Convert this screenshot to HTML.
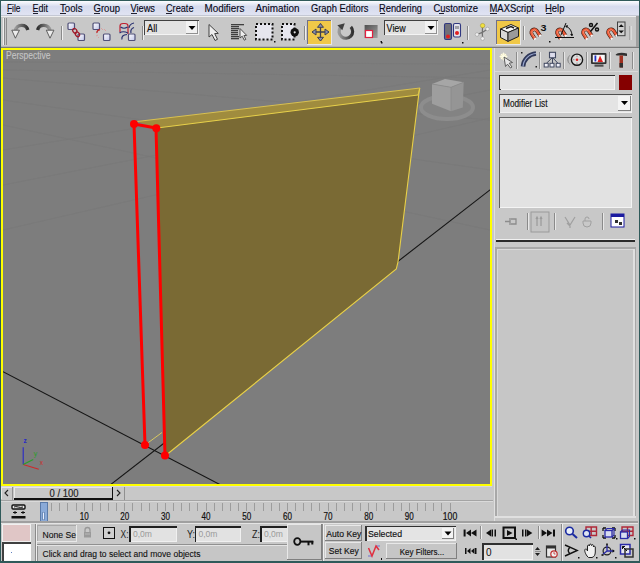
<!DOCTYPE html>
<html><head><meta charset="utf-8">
<style>
html,body{margin:0;padding:0;width:640px;height:563px;overflow:hidden;background:#c8c8c8;}
svg{display:block;font-family:"Liberation Sans",sans-serif;}
</style></head>
<body>
<svg width="640" height="563" viewBox="0 0 640 563" shape-rendering="crispEdges">
<defs>
<linearGradient id="mb" x1="0" y1="0" x2="0" y2="1">
<stop offset="0" stop-color="#fdfdff"/><stop offset="0.1" stop-color="#f2f4fb"/><stop offset="0.4" stop-color="#d6dbee"/><stop offset="1" stop-color="#e0e3f2"/>
</linearGradient>

</defs>
<!-- base -->
<rect x="0" y="0" width="640" height="563" fill="#c8c8c8"/>
<!-- menubar -->
<rect x="1" y="1" width="638" height="14" fill="url(#mb)"/><rect x="1" y="15" width="638" height="1" fill="#c4c8d4"/><rect x="1" y="16" width="638" height="1" fill="#eeeeee"/>
<g id="menu" font-size="10.9" fill="#0a0a1a" stroke="#0a0a1a" stroke-width="0.15">
<text x="7" y="12.3" textLength="13.5" lengthAdjust="spacingAndGlyphs">File</text>
<text x="32.5" y="12.3" textLength="15.5" lengthAdjust="spacingAndGlyphs">Edit</text>
<text x="60" y="12.3" textLength="22.5" lengthAdjust="spacingAndGlyphs">Tools</text>
<text x="93.5" y="12.3" textLength="26.5" lengthAdjust="spacingAndGlyphs">Group</text>
<text x="130.5" y="12.3" textLength="24.5" lengthAdjust="spacingAndGlyphs">Views</text>
<text x="166" y="12.3" textLength="27.5" lengthAdjust="spacingAndGlyphs">Create</text>
<text x="204.5" y="12.3" textLength="40" lengthAdjust="spacingAndGlyphs">Modifiers</text>
<text x="255.5" y="12.3" textLength="44" lengthAdjust="spacingAndGlyphs">Animation</text>
<text x="311" y="12.3" textLength="57.5" lengthAdjust="spacingAndGlyphs">Graph Editors</text>
<text x="379" y="12.3" textLength="43" lengthAdjust="spacingAndGlyphs">Rendering</text>
<text x="433.5" y="12.3" textLength="44.5" lengthAdjust="spacingAndGlyphs">Customize</text>
<text x="489.5" y="12.3" textLength="44.5" lengthAdjust="spacingAndGlyphs">MAXScript</text>
<text x="545" y="12.3" textLength="19.5" lengthAdjust="spacingAndGlyphs">Help</text>
</g>
<g fill="#202030">
<rect x="7" y="13.2" width="5" height="1"/><rect x="32.5" y="13.2" width="5" height="1"/><rect x="60" y="13.2" width="5.5" height="1"/>
<rect x="93.5" y="13.2" width="6.5" height="1"/><rect x="130.5" y="13.2" width="6" height="1"/><rect x="166" y="13.2" width="6" height="1"/>
<rect x="379.5" y="13.2" width="5.5" height="1"/><rect x="438.8" y="13.2" width="5" height="1"/><rect x="489.5" y="13.2" width="7" height="1"/>
<rect x="545.5" y="13.2" width="6" height="1"/>
</g>
<!-- toolbar base -->
<rect x="1" y="17" width="638" height="29" fill="#c8c8c8"/>
<rect x="1" y="46" width="638" height="1" fill="#b4b4b4"/><rect x="1" y="47" width="638" height="1" fill="#7a7a7a"/>
<g id="toolbar" shape-rendering="geometricPrecision">
<linearGradient id="arcg" x1="0" y1="0" x2="1" y2="0"><stop offset="0" stop-color="#9a9a9a"/><stop offset="1" stop-color="#303030"/></linearGradient>
<linearGradient id="arcg2" x1="0" y1="0" x2="1" y2="0"><stop offset="0" stop-color="#303030"/><stop offset="1" stop-color="#9a9a9a"/></linearGradient>
<linearGradient id="sqg" x1="0" y1="0" x2="1" y2="1"><stop offset="0" stop-color="#ffffff"/><stop offset="1" stop-color="#c0c4e8"/></linearGradient>
<!-- grip -->
<rect x="3" y="18" width="1" height="27" fill="#f0f0f0"/><rect x="4" y="18" width="1" height="27" fill="#8a8a8a"/>
<rect x="6" y="18" width="1" height="27" fill="#8a8a8a"/>
<!-- undo -->
<path d="M27.8,30 A6.3,6.2 0 0 0 15.5,30.5" fill="none" stroke="url(#arcg)" stroke-width="3.4"/>
<path d="M11.8,30.2 L19.4,30.2 L15.4,38.2 Z" fill="#ececec" stroke="#505050" stroke-width="0.9"/>
<!-- redo -->
<path d="M37.6,30 A6.3,6.2 0 0 1 49.9,30.5" fill="none" stroke="url(#arcg2)" stroke-width="3.4"/>
<path d="M46.3,30.2 L53.9,30.2 L50,38.2 Z" fill="#ececec" stroke="#505050" stroke-width="0.9"/>
<rect x="61" y="26" width="1" height="14" fill="#8a8a8a"/><rect x="62" y="26" width="1" height="14" fill="#f0f0f0"/>
<!-- link -->
<rect x="68" y="23" width="6.5" height="6.5" rx="1" fill="url(#sqg)" stroke="#505078" stroke-width="1.2"/>
<rect x="78" y="34" width="6.5" height="6.5" rx="1" fill="url(#sqg)" stroke="#505078" stroke-width="1.2"/>
<ellipse cx="74.8" cy="30.8" rx="2.5" ry="1.9" transform="rotate(55 74.8 30.8)" fill="none" stroke="#a01a2a" stroke-width="1.3"/>
<ellipse cx="77.4" cy="34.3" rx="2.5" ry="1.9" transform="rotate(55 77.4 34.3)" fill="none" stroke="#a01a2a" stroke-width="1.3"/>
<!-- unlink -->
<rect x="93" y="23" width="6.5" height="6.5" rx="1" fill="url(#sqg)" stroke="#505078" stroke-width="1.2"/>
<rect x="103.5" y="34" width="6.5" height="6.5" rx="1" fill="url(#sqg)" stroke="#505078" stroke-width="1.2"/>
<path d="M97,33 a2.5,2.5 0 0 1 3,-3" fill="none" stroke="#c02020" stroke-width="1.3"/>
<path d="M96,36 l2,-1 M101,28 l2,2 M104,29 l2,2 M98,38 l1,-1" stroke="#d8a0a0" stroke-width="1"/>
<!-- bind -->
<path d="M120,32 L120,26 Q120,23.5 123,23.5 L125,23.5 Q128,23.5 128,26 L128,34" fill="none" stroke="#c02030" stroke-width="1.2"/>
<path d="M120.5,27 Q124,29.5 127.5,27 M119.5,33 Q123,30.5 128,33 M122,39.5 Q121,35 127,34.5 M129,28 Q129.5,24 134,23 M131,33 Q130,29 134,27.5" fill="none" stroke="#283070" stroke-width="1.2"/>
<rect x="128.5" y="34" width="6.5" height="6.5" rx="1" fill="url(#sqg)" stroke="#505078" stroke-width="1.2"/>
<rect x="142" y="26" width="1" height="14" fill="#8a8a8a"/><rect x="143" y="26" width="1" height="14" fill="#f0f0f0"/>
<!-- All dropdown -->
<rect x="144" y="20" width="55" height="15" fill="#f4f4f4"/>
<rect x="144" y="20" width="55" height="1" fill="#404040"/><rect x="144" y="20" width="1" height="15" fill="#404040"/>
<rect x="145" y="21" width="53" height="13" fill="#e2e2e2"/>
<rect x="186" y="21" width="12" height="13" fill="#f2f2f2"/>
<rect x="186" y="33" width="12" height="1" fill="#909090"/><rect x="197" y="21" width="1" height="13" fill="#909090"/>
<polygon points="188.5,26 195.5,26 192,30" fill="#000"/>
<text x="147" y="32" font-size="10.2" fill="#101010" stroke="#101010" stroke-width="0.15" textLength="10.3" lengthAdjust="spacingAndGlyphs">All</text>
<!-- select cursor -->
<path d="M209,24.5 L209,37 L212,34.5 L215,40.5 L217.5,39.3 L214.7,33.6 L218.3,33.4 Z" fill="#eeeeee" stroke="#404040" stroke-width="1"/>
<!-- select by name -->
<g fill="#404040">
<rect x="231" y="24" width="13" height="1.3"/><rect x="231" y="26" width="8" height="1.3"/><rect x="231" y="28" width="8" height="1.3"/>
<rect x="231" y="30" width="7" height="1.3"/><rect x="231" y="32" width="7" height="1.3"/><rect x="231" y="34" width="7" height="1.3"/>
<rect x="231" y="36" width="8" height="1.3"/><rect x="231" y="38" width="8" height="1.3"/>
</g>
<path d="M240,28.5 L240,38 L242.2,36.2 L244.3,40.2 L245.8,39.4 L243.9,35.6 L246.7,35.4 Z" fill="#eeeeee" stroke="#404040" stroke-width="0.9"/>
<!-- rect select -->
<rect x="256" y="24" width="16.5" height="15.5" fill="#e6e6ee"/>
<rect x="256" y="24" width="16.5" height="15.5" fill="none" stroke="#101010" stroke-width="2" stroke-dasharray="2,2"/>
<rect x="274" y="41" width="1.5" height="1.5" fill="#101010"/>
<!-- window crossing -->
<rect x="282" y="24" width="12.5" height="15.5" fill="#e6e6ee"/>
<rect x="282" y="24" width="12.5" height="15.5" fill="none" stroke="#101010" stroke-width="2" stroke-dasharray="2,2"/>
<circle cx="294.7" cy="32.3" r="4.2" fill="#101010"/><circle cx="294.7" cy="32.3" r="1.1" fill="#e0e0e0"/>
<rect x="304" y="26" width="1" height="14" fill="#8a8a8a"/><rect x="305" y="26" width="1" height="14" fill="#f0f0f0"/>
<!-- move button -->
<rect x="307" y="20" width="25" height="25" fill="#f0c848"/>
<rect x="307" y="20" width="25" height="1" fill="#707088"/><rect x="307" y="20" width="1" height="25" fill="#707088"/>
<rect x="307" y="44" width="25" height="1" fill="#e8e8e8"/><rect x="331" y="20" width="1" height="25" fill="#e8e8e8"/>
<path d="M312,32 H329 M320.5,23.6 V41" stroke="#404050" stroke-width="1.3"/>
<path d="M312,32 L316,29 L316,35 Z M329,32 L325,29 L325,35 Z M320.5,23.6 L317.5,27.3 L323.5,27.3 Z M320.5,41 L317.5,37.3 L323.5,37.3 Z" fill="#8890b0" stroke="#404050" stroke-width="1"/>
<!-- rotate -->
<path d="M340.3,27.5 A6.8,6.8 0 1 0 350.8,26.8" fill="none" stroke="url(#arcg)" stroke-width="3.2"/>
<path d="M344.8,23.3 L337.3,25.3 L342.3,30.2 Z" fill="#404040"/>
<!-- scale -->
<linearGradient id="scg" x1="0" y1="0" x2="1" y2="1"><stop offset="0" stop-color="#505050"/><stop offset="1" stop-color="#a0a0a0"/></linearGradient>
<rect x="364.6" y="25" width="13" height="13" fill="url(#scg)"/>
<rect x="365.5" y="30.5" width="7" height="7" fill="#ffffff" stroke="#e02040" stroke-width="1.2"/>
<rect x="380.5" y="41" width="1.5" height="1.5" fill="#101010"/>
<!-- View dropdown -->
<rect x="384" y="20" width="54" height="15" fill="#f4f4f4"/>
<rect x="384" y="20" width="54" height="1" fill="#404040"/><rect x="384" y="20" width="1" height="15" fill="#404040"/>
<rect x="385" y="21" width="52" height="13" fill="#e2e2e2"/>
<rect x="425" y="21" width="12" height="13" fill="#f2f2f2"/>
<rect x="425" y="33" width="12" height="1" fill="#909090"/><rect x="436" y="21" width="1" height="13" fill="#909090"/>
<polygon points="427.5,26 434.5,26 431,30" fill="#000"/>
<text x="386.6" y="32" font-size="10.2" fill="#101010" stroke="#101010" stroke-width="0.15" textLength="19.2" lengthAdjust="spacingAndGlyphs">View</text>
<rect x="381" y="42" width="1.5" height="1.5" fill="#101010"/>
<!-- pivot -->
<rect x="444.5" y="23.5" width="7" height="16" rx="1.5" fill="#707078" stroke="#303880" stroke-width="1.1"/>
<circle cx="448" cy="36.5" r="2" fill="#e02020"/>
<rect x="453.5" y="23.5" width="7" height="13.5" rx="1.5" fill="#e4e4ec" stroke="#303880" stroke-width="1.1"/>
<rect x="455" y="26" width="4" height="3" fill="#a0a0a8"/>
<circle cx="457" cy="33" r="2" fill="#e02020"/>
<rect x="462" y="42" width="1.5" height="1.5" fill="#101010"/>
<rect x="467" y="26" width="1" height="14" fill="#8a8a8a"/><rect x="468" y="26" width="1" height="14" fill="#f0f0f0"/>
<!-- manipulate -->
<path d="M482.3,32.4 L482.6,25.6 M482.3,32.4 L487.5,29 M482.3,32.4 L477,34.5 M482.3,32.4 L482.6,38.6" stroke="#707070" stroke-width="1.2"/>
<circle cx="482.6" cy="25.6" r="2.2" fill="#f0e040" stroke="#a09020" stroke-width="0.5"/>
<circle cx="487.5" cy="29" r="1.8" fill="#f0f0f0" stroke="#909090" stroke-width="0.5"/>
<circle cx="477" cy="34.5" r="1.8" fill="#f0f0f0" stroke="#909090" stroke-width="0.5"/>
<circle cx="482.6" cy="38.6" r="1.8" fill="#f0f0f0" stroke="#909090" stroke-width="0.5"/>
<!-- yellow button -->
<rect x="496" y="20" width="25" height="25" fill="#f0c848"/>
<rect x="496" y="20" width="25" height="1" fill="#707088"/><rect x="496" y="20" width="1" height="25" fill="#707088"/>
<rect x="496" y="44" width="25" height="1" fill="#e8e8e8"/><rect x="520" y="20" width="1" height="25" fill="#e8e8e8"/>
<path d="M500.5,29 L511,24.5 L518.5,28 L508,32.5 Z" fill="#f8f8f8" stroke="#202020" stroke-width="1"/>
<path d="M500.5,29 L508,32.5 L508,41.4 L500.5,37.5 Z" fill="#d8d8d8" stroke="#202020" stroke-width="1"/>
<path d="M508,32.5 L518.5,28 L518.5,36.5 L508,41.4 Z" fill="#9a9a9a" stroke="#202020" stroke-width="1"/>
<path d="M506,28.5 L511,26.5 L514,28" stroke="#202020" stroke-width="1.5" fill="none"/>
<rect x="523" y="26" width="1" height="14" fill="#8a8a8a"/><rect x="524" y="26" width="1" height="14" fill="#f0f0f0"/>
<!-- snaps -->

<g transform="translate(534.3,32.4) rotate(-33)">
<path d="M-3,6 L-3,0 A3,3 0 0 1 3,0 L3,6" fill="none" stroke="#4a2418" stroke-width="3.6"/>
<path d="M-3,6 L-3,0 A3,3 0 0 1 3,0 L3,6" fill="none" stroke="#ee5a38" stroke-width="2.3"/>
<path d="M-2.3,5 L-2.3,0 A2.3,2.3 0 0 1 2.3,0" fill="none" stroke="#ffa080" stroke-width="0.7"/>
<rect x="-4.2" y="5" width="2.4" height="1.6" fill="#f8f8f8"/><rect x="1.8" y="5" width="2.4" height="1.6" fill="#f8f8f8"/>
</g>
<g transform="translate(560,32.4) rotate(-33)">
<path d="M-3,6 L-3,0 A3,3 0 0 1 3,0 L3,6" fill="none" stroke="#4a2418" stroke-width="3.6"/>
<path d="M-3,6 L-3,0 A3,3 0 0 1 3,0 L3,6" fill="none" stroke="#ee5a38" stroke-width="2.3"/>
<path d="M-2.3,5 L-2.3,0 A2.3,2.3 0 0 1 2.3,0" fill="none" stroke="#ffa080" stroke-width="0.7"/>
<rect x="-4.2" y="5" width="2.4" height="1.6" fill="#f8f8f8"/><rect x="1.8" y="5" width="2.4" height="1.6" fill="#f8f8f8"/>
</g>
<g transform="translate(586,32.4) rotate(-33)">
<path d="M-3,6 L-3,0 A3,3 0 0 1 3,0 L3,6" fill="none" stroke="#4a2418" stroke-width="3.6"/>
<path d="M-3,6 L-3,0 A3,3 0 0 1 3,0 L3,6" fill="none" stroke="#ee5a38" stroke-width="2.3"/>
<path d="M-2.3,5 L-2.3,0 A2.3,2.3 0 0 1 2.3,0" fill="none" stroke="#ffa080" stroke-width="0.7"/>
<rect x="-4.2" y="5" width="2.4" height="1.6" fill="#f8f8f8"/><rect x="1.8" y="5" width="2.4" height="1.6" fill="#f8f8f8"/>
</g>
<g transform="translate(611,32.2) rotate(-33)">
<path d="M-3,6 L-3,0 A3,3 0 0 1 3,0 L3,6" fill="none" stroke="#4a2418" stroke-width="3.6"/>
<path d="M-3,6 L-3,0 A3,3 0 0 1 3,0 L3,6" fill="none" stroke="#ee5a38" stroke-width="2.3"/>
<path d="M-2.3,5 L-2.3,0 A2.3,2.3 0 0 1 2.3,0" fill="none" stroke="#ffa080" stroke-width="0.7"/>
<rect x="-4.2" y="5" width="2.4" height="1.6" fill="#f8f8f8"/><rect x="1.8" y="5" width="2.4" height="1.6" fill="#f8f8f8"/>
</g>
<text x="540.5" y="30.5" font-size="9.5" font-weight="bold" fill="#101010" textLength="6" lengthAdjust="spacingAndGlyphs">3</text>
<rect x="549" y="41" width="1.5" height="1.5" fill="#101010"/>
<path d="M555,37.5 H574 M561,35 L566,23 M566,26 A11,11 0 0 1 572,36" fill="none" stroke="#101010" stroke-width="1"/>
<path d="M565,26 l3,-1 l-1,3 z M572,36 l-2,-2 l3,0 z" fill="#101010"/>
<g fill="none" stroke="#101010" stroke-width="1.5"><circle cx="591" cy="25" r="1.5"/><circle cx="597" cy="29.5" r="1.5"/><path d="M597.5,23 L590.5,31.5"/></g>
<rect x="617.5" y="22" width="7.5" height="13.7" fill="#d0d0d0" stroke="#404040" stroke-width="1"/>
<path d="M618.5,27 L621.2,24.3 L623.9,27 Z M618.5,30.5 L621.2,33.2 L623.9,30.5 Z" fill="#101010"/>
<rect x="629.5" y="26" width="1" height="14" fill="#8a8a8a"/><rect x="630.5" y="26" width="1" height="14" fill="#f0f0f0"/>
<rect x="636" y="16" width="3" height="31" fill="#a0a0a0"/>
</g>

<!-- viewport -->
<rect x="1" y="48" width="491" height="438" fill="#ffff00"/>
<rect x="3" y="50" width="487" height="434" fill="#7d7d7d"/>
<g id="vp" shape-rendering="geometricPrecision">
<clipPath id="vpc"><rect x="3" y="50" width="487" height="434"/></clipPath>
<g clip-path="url(#vpc)">
<g stroke="#777777" stroke-width="0.7" fill="none" opacity="0.7">
<line x1="3" y1="150" x2="490" y2="70"/>
<line x1="3" y1="185" x2="490" y2="90"/>
<line x1="3" y1="230" x2="490" y2="118"/>
<line x1="3" y1="78" x2="490" y2="120"/>
<line x1="3" y1="100" x2="490" y2="170"/>
<line x1="3" y1="125" x2="490" y2="230"/>
<line x1="3" y1="62" x2="490" y2="64"/>
<line x1="3" y1="70" x2="490" y2="78"/>
</g>
<line x1="3" y1="371.7" x2="240" y2="495" stroke="#151515" stroke-width="1.1"/>
<line x1="105" y1="489" x2="495" y2="186" stroke="#151515" stroke-width="1.1"/>
<!-- box front face -->
<polygon points="157,128 418,95 419.5,88.5 398,262 396.3,269 165,456" fill="#7a6a34"/>
<!-- top strip -->
<polygon points="137,121.5 420,88 418,95 157,128" fill="#a08c3e"/>
<polyline points="137,121.5 420,88 418,95" fill="none" stroke="#d8c050" stroke-width="1"/>
<polyline points="157,128 418,95" fill="none" stroke="#e8d048" stroke-width="1"/><polyline points="419.5,88.5 398,262 396.3,269 165,456" fill="none" stroke="#e8d048" stroke-width="1.1"/>
<line x1="145" y1="445" x2="162" y2="432.5" stroke="#d8c860" stroke-width="1"/>
<!-- red edges -->
<g stroke="#ff0000" stroke-width="3" fill="none" stroke-linecap="round">
<line x1="134" y1="124" x2="145" y2="445"/>
<line x1="156" y1="128" x2="165" y2="456"/>
<line x1="134" y1="124" x2="156" y2="128"/>
</g>
<g fill="#ff0000">
<circle cx="134" cy="124" r="4"/><circle cx="156.3" cy="128.3" r="4"/>
<circle cx="145" cy="445" r="4"/><circle cx="165" cy="455.5" r="4"/>
</g>
<!-- viewcube -->
<ellipse cx="447" cy="107.5" rx="26" ry="11.5" fill="#838383" stroke="#8d8d8d" stroke-width="4"/>
<polygon points="432,84 445,79 463.7,82.2 451,87.3" fill="#a6a6a6"/>
<polygon points="432,84 451,87.3 451,111.2 432,103.8" fill="#9e9e9e"/>
<polygon points="451,87.3 463.7,82.2 462.8,107.5 451,111.2" fill="#959595"/>
<path d="M432,84 L451,87.3 L451,111.2 M451,87.3 L463.7,82.2" stroke="#8a8a8a" stroke-width="0.8" fill="none"/>
<!-- axis tripod -->
<g stroke-width="1.1" fill="none">
<line x1="23.2" y1="464.5" x2="23.2" y2="447.2" stroke="#2828c8"/>
<line x1="23.2" y1="464.5" x2="38.8" y2="469.2" stroke="#d02828"/>
<line x1="23.2" y1="464.5" x2="33.2" y2="459.6" stroke="#28a028"/>
</g>
<text x="23.6" y="443" font-size="6.5" font-weight="bold" fill="#2828c8">z</text>
<text x="33.8" y="455.5" font-size="7" fill="#28a028">y</text>
<text x="39.8" y="465.3" font-size="6.5" fill="#d02828">x</text>
<text x="6" y="59" font-size="10.5" fill="#c4c4c4" stroke="#c4c4c4" stroke-width="0.15" textLength="44.5" lengthAdjust="spacingAndGlyphs">Perspective</text>
</g>
</g>

<!-- command panel -->
<rect x="492" y="48" width="147" height="474" fill="#c8c8c8"/>
<g id="cmdpanel">
<rect x="494" y="48" width="1" height="473" fill="#e0e0e0"/>
<!-- tabs -->
<rect x="495" y="49" width="143" height="22" fill="#c6c6c6"/>
<g fill="#8c8c8c">
<rect x="516" y="52" width="1" height="17"/><rect x="539" y="52" width="1" height="17"/>
<rect x="563" y="52" width="1" height="17"/><rect x="586" y="52" width="1" height="17"/>
<rect x="609" y="52" width="1" height="17"/><rect x="632" y="52" width="1" height="17"/>
</g>
<g fill="#e6e6e6">
<rect x="517" y="52" width="1" height="17"/><rect x="540" y="52" width="1" height="17"/>
<rect x="564" y="52" width="1" height="17"/><rect x="587" y="52" width="1" height="17"/>
<rect x="610" y="52" width="1" height="17"/><rect x="633" y="52" width="1" height="17"/>
</g>
<rect x="495" y="71" width="143" height="1" fill="#dadada"/>
<g id="tabicons" shape-rendering="geometricPrecision">
<!-- create: sparkle cursor -->
<circle cx="503.5" cy="56.5" r="3.2" fill="#fff8d0" opacity="0.8"/>
<path d="M499.5,56.5 h8 M503.5,52.5 v8 M501,54 l5,5 M506,54 l-5,5" stroke="#ffffe8" stroke-width="0.8"/>
<path d="M504,57 L505.5,66.5 L507.5,64.2 L510.5,68 L512,67 L509.2,63.2 L512.5,62.5 Z" fill="#e8e8e8" stroke="#505050" stroke-width="0.9"/>
<!-- modify: arc -->
<path d="M523,66.5 A14,14 0 0 1 536,53.5" fill="none" stroke="#303858" stroke-width="4.6"/>
<path d="M523,66.5 A14,14 0 0 1 536,53.5" fill="none" stroke="#9aa8d0" stroke-width="1.2"/>
<rect x="521" y="52" width="1.5" height="1.5" fill="#202020"/>
<rect x="535.5" y="66" width="1.5" height="1.5" fill="#202020"/>
<!-- hierarchy -->
<path d="M552.5,57.5 L546.2,63.5 M552.5,57.5 V63.5 M552.5,57.5 L558.2,63.5" fill="none" stroke="#404860" stroke-width="1"/>
<rect x="549.5" y="52.3" width="6" height="5.5" fill="#dcdcec" stroke="#404860" stroke-width="1.1"/>
<rect x="544.2" y="63.3" width="4" height="3.7" fill="#f0f0f8" stroke="#404860" stroke-width="1"/>
<rect x="550" y="63.3" width="4" height="3.7" fill="#f0f0f8" stroke="#404860" stroke-width="1"/>
<rect x="556.2" y="63.3" width="4" height="3.7" fill="#f0f0f8" stroke="#404860" stroke-width="1"/>
<!-- motion wheel -->
<path d="M570,55 A7,7 0 0 0 570,64.5 M568.5,56.5 A6,6 0 0 0 568.5,63" fill="none" stroke="#909090" stroke-width="0.8"/>
<circle cx="577" cy="59.7" r="5.6" fill="#dcdcdc" stroke="#151515" stroke-width="1.4"/>
<circle cx="577" cy="59.7" r="1.3" fill="#e02020"/>
<path d="M577,55.5 v1.5 M577,62.5 v1.5 M573,59.7 h1.5 M579.5,59.7 h1.5" stroke="#909090" stroke-width="0.9"/>
<!-- display monitor -->
<rect x="591" y="53" width="15.5" height="11" rx="1" fill="#303030"/>
<rect x="592.8" y="54.8" width="12" height="7.5" fill="#f8f8f8"/>
<rect x="594.5" y="55.5" width="1.8" height="6" fill="#2030c0"/>
<path d="M597.5,62 L600,55.5 L603,62 Z" fill="#e02020"/>
<rect x="594.5" y="64.5" width="9" height="2.2" fill="#505050"/>
<!-- hammer -->
<path d="M615.5,55 C617,52.5 622,52 627,53.5 L627,56 L622,55.5 L617,55.5 Z" fill="#303030"/>
<rect x="619.5" y="55.5" width="3.5" height="12" fill="#a03020"/>
<rect x="619.5" y="63" width="3.5" height="4.5" fill="#303030"/>
</g>
<!-- name field -->
<rect x="499" y="75" width="116" height="15" fill="#f2f2f2"/>
<rect x="499" y="74.5" width="116" height="1.8" fill="#303030"/>
<rect x="499" y="74.5" width="1.5" height="15.5" fill="#303030"/>
<rect x="500" y="76" width="114" height="13" fill="#e4e4e4"/>
<rect x="619" y="75" width="13" height="15" fill="#850000"/>
<!-- modifier list -->
<rect x="499" y="94" width="133" height="19" fill="#f0f0f0"/>
<rect x="499" y="93.5" width="133" height="1.8" fill="#505050"/>
<rect x="499" y="94" width="1" height="19" fill="#505050"/>
<rect x="500" y="95" width="131" height="17" fill="#e4e4e4"/>
<rect x="618" y="96" width="13" height="15" fill="#f4f4f4"/>
<rect x="618" y="110" width="13" height="1" fill="#808080"/>
<rect x="630" y="96" width="1" height="15" fill="#808080"/>
<polygon points="621,101 628,101 624.5,105" fill="#000" shape-rendering="geometricPrecision"/>
<text x="503" y="107" font-size="10" fill="#101010" stroke="#101010" stroke-width="0.15" textLength="44.5" lengthAdjust="spacingAndGlyphs">Modifier List</text>
<!-- stack box -->
<rect x="499" y="117" width="133" height="91" fill="#f4f4f4"/>
<rect x="499" y="117" width="133" height="1" fill="#606060"/>
<rect x="499" y="117" width="1" height="91" fill="#606060"/>
<rect x="500" y="118" width="131" height="89" fill="#e2e2e2"/>
<!-- stack icons -->
<g shape-rendering="geometricPrecision">
<rect x="527" y="213" width="1" height="17" fill="#8a8a8a"/><rect x="528" y="213" width="1" height="17" fill="#e8e8e8"/>
<rect x="554" y="213" width="1" height="17" fill="#8a8a8a"/><rect x="555" y="213" width="1" height="17" fill="#e8e8e8"/>
<rect x="602" y="213" width="1" height="17" fill="#8a8a8a"/><rect x="603" y="213" width="1" height="17" fill="#e8e8e8"/>
<!-- pressed button -->
<rect x="531" y="212" width="18" height="20" fill="#c4c4c4" stroke="#9a9a9a" stroke-width="1"/>
<g fill="none" stroke="#9a9a9a" stroke-width="1.2">
<path d="M537,226 V218 M541,226 V218 M536,219 L537,217 L538,219 M540,219 L541,217 L542,219"/>
</g>
<!-- pin -->
<path d="M505,221.5 H510 M510,218 V225 M511,219 H516 V224 H511" fill="none" stroke="#8c8c8c" stroke-width="1.3"/>
<!-- fork -->
<path d="M565,217 L570,225 L575,217 M567,223 L570,226 M570,226 V228" fill="none" stroke="#a0a0a0" stroke-width="1.2"/>
<path d="M583,223 a3,3 0 1,0 8,0 v-2 h-8 z M585,221 v-2 a2,2 0 0,1 4,0" fill="none" stroke="#a0a0a0" stroke-width="1"/>
<!-- configure -->
<rect x="611" y="214" width="13" height="13" fill="#ffffff" stroke="#1a1aa0" stroke-width="1"/>
<rect x="611" y="214" width="13" height="3" fill="#1a1aa0"/>
<path d="M615,220 h3 v3 h-3 z M619,222 h3 v3 h-3 z" fill="#303030"/>
</g>
<!-- separator -->
<rect x="496" y="239" width="139" height="1" fill="#f0f0f0"/>
<rect x="496" y="240" width="139" height="2" fill="#2a2a2a"/>
<!-- rollout box -->
<rect x="495" y="247" width="141" height="271" fill="#a8a8a8"/>
<rect x="497" y="249" width="137" height="267" fill="#c6c6c6"/>
<rect x="497" y="249" width="137" height="1" fill="#d8d8d8"/>
<rect x="497" y="249" width="1" height="267" fill="#d8d8d8"/>
<rect x="495" y="516" width="141" height="2" fill="#e0e0e0"/>
<rect x="633" y="249" width="2" height="268" fill="#e0e0e0"/>
</g>

<!-- bottom -->
<g id="bottom">
<!-- time slider row -->
<rect x="1" y="486" width="491" height="1" fill="#d8d8d8"/>
<rect x="1" y="487" width="13" height="13" fill="#c8c8c8"/>
<rect x="1" y="487" width="12" height="1" fill="#e8e8e8"/><rect x="1" y="487" width="1" height="12" fill="#e8e8e8"/>
<rect x="12" y="487" width="1" height="13" fill="#909090"/>
<path d="M8,490 L5,493 L8,496" fill="none" stroke="#202020" stroke-width="1.1" shape-rendering="geometricPrecision"/>
<rect x="14" y="487" width="99" height="13" fill="#c8c8c8"/>
<rect x="14" y="487" width="98" height="1" fill="#e8e8e8"/><rect x="14" y="487" width="1" height="12" fill="#e8e8e8"/>
<rect x="14" y="498" width="99" height="2" fill="#101010"/><rect x="112" y="487" width="1.2" height="13" fill="#101010"/>
<text x="49.5" y="496.6" font-size="10.4" fill="#202020" stroke="#202020" stroke-width="0.15" textLength="29" lengthAdjust="spacingAndGlyphs">0 / 100</text>
<rect x="113" y="487" width="12" height="13" fill="#c8c8c8"/>
<rect x="124" y="487" width="1" height="13" fill="#909090"/>
<path d="M117,490 L120,493 L117,496" fill="none" stroke="#202020" stroke-width="1.1" shape-rendering="geometricPrecision"/>
<rect x="1" y="500" width="492" height="1" fill="#a4a4a4"/><rect x="1" y="501" width="492" height="1" fill="#dadada"/>
<!-- track bar -->
<g fill="#9c9c9c"><rect x="51.13" y="503" width="1" height="8"/><rect x="59.26" y="503" width="1" height="8"/><rect x="67.39" y="503" width="1" height="8"/><rect x="75.52" y="503" width="1" height="8"/><rect x="83.65" y="503" width="1" height="8"/><rect x="91.78" y="503" width="1" height="8"/><rect x="99.91" y="503" width="1" height="8"/><rect x="108.04" y="503" width="1" height="8"/><rect x="116.17" y="503" width="1" height="8"/><rect x="124.30" y="503" width="1" height="8"/><rect x="132.43" y="503" width="1" height="8"/><rect x="140.56" y="503" width="1" height="8"/><rect x="148.69" y="503" width="1" height="8"/><rect x="156.82" y="503" width="1" height="8"/><rect x="164.95" y="503" width="1" height="8"/><rect x="173.08" y="503" width="1" height="8"/><rect x="181.21" y="503" width="1" height="8"/><rect x="189.34" y="503" width="1" height="8"/><rect x="197.47" y="503" width="1" height="8"/><rect x="205.60" y="503" width="1" height="8"/><rect x="213.73" y="503" width="1" height="8"/><rect x="221.86" y="503" width="1" height="8"/><rect x="229.99" y="503" width="1" height="8"/><rect x="238.12" y="503" width="1" height="8"/><rect x="246.25" y="503" width="1" height="8"/><rect x="254.38" y="503" width="1" height="8"/><rect x="262.51" y="503" width="1" height="8"/><rect x="270.64" y="503" width="1" height="8"/><rect x="278.77" y="503" width="1" height="8"/><rect x="286.90" y="503" width="1" height="8"/><rect x="295.03" y="503" width="1" height="8"/><rect x="303.16" y="503" width="1" height="8"/><rect x="311.29" y="503" width="1" height="8"/><rect x="319.42" y="503" width="1" height="8"/><rect x="327.55" y="503" width="1" height="8"/><rect x="335.68" y="503" width="1" height="8"/><rect x="343.81" y="503" width="1" height="8"/><rect x="351.94" y="503" width="1" height="8"/><rect x="360.07" y="503" width="1" height="8"/><rect x="368.20" y="503" width="1" height="8"/><rect x="376.33" y="503" width="1" height="8"/><rect x="384.46" y="503" width="1" height="8"/><rect x="392.59" y="503" width="1" height="8"/><rect x="400.72" y="503" width="1" height="8"/><rect x="408.85" y="503" width="1" height="8"/><rect x="416.98" y="503" width="1" height="8"/><rect x="425.11" y="503" width="1" height="8"/><rect x="433.24" y="503" width="1" height="8"/><rect x="441.37" y="503" width="1" height="8"/><rect x="449.50" y="503" width="1" height="8"/></g>
<g font-size="10.6" fill="#101010" stroke="#101010" stroke-width="0.2"><text x="79.65" y="520" textLength="9.0" lengthAdjust="spacingAndGlyphs">10</text><text x="120.30" y="520" textLength="9.0" lengthAdjust="spacingAndGlyphs">20</text><text x="160.95" y="520" textLength="9.0" lengthAdjust="spacingAndGlyphs">30</text><text x="201.60" y="520" textLength="9.0" lengthAdjust="spacingAndGlyphs">40</text><text x="242.25" y="520" textLength="9.0" lengthAdjust="spacingAndGlyphs">50</text><text x="282.90" y="520" textLength="9.0" lengthAdjust="spacingAndGlyphs">60</text><text x="323.55" y="520" textLength="9.0" lengthAdjust="spacingAndGlyphs">70</text><text x="364.20" y="520" textLength="9.0" lengthAdjust="spacingAndGlyphs">80</text><text x="404.85" y="520" textLength="9.0" lengthAdjust="spacingAndGlyphs">90</text><text x="442.75" y="520" textLength="14.5" lengthAdjust="spacingAndGlyphs">100</text></g>
<rect x="40" y="502" width="7" height="20" fill="#8aaad8"/>
<rect x="40" y="502" width="7" height="20" fill="none" stroke="#5a7aa8" stroke-width="1"/>
<rect x="42.6" y="512" width="1.8" height="8" rx="0.9" fill="#e8f0ff" stroke="#5a7aa8" stroke-width="0.6"/>
<!-- mini curve editor icon -->
<g shape-rendering="geometricPrecision">
<rect x="12" y="505" width="13" height="4" rx="1" fill="#e8e8e8" stroke="#101010" stroke-width="1.4"/>
<path d="M14,507 C16,505.5 20,508.5 23,507" stroke="#101010" stroke-width="1" fill="none"/>
<path d="M13,512.5 h4 M21,512.5 h4 M15,511 v3 M23,511 v3" stroke="#101010" stroke-width="1"/>
<rect x="11.5" y="516" width="14" height="2.5" fill="#101010"/>
</g>
<rect x="1" y="521" width="637" height="1.5" fill="#a0a0a0"/>
<rect x="1" y="522.5" width="637" height="1" fill="#e4e4e4"/>
<!-- swatches -->
<rect x="2" y="524" width="29" height="18" fill="#f0f0f0"/>
<rect x="3" y="525" width="27" height="16" fill="#e0c6c6"/>
<rect x="2" y="542" width="29" height="19" fill="#f8f8f8"/>
<rect x="2" y="542" width="29" height="2" fill="#404040"/><rect x="2" y="542" width="1.5" height="19" fill="#404040"/>
<rect x="3.5" y="544" width="27" height="16" fill="#ffffff"/>
<rect x="11" y="552" width="1" height="1" fill="#6080c0"/>
<rect x="35" y="524" width="1" height="37" fill="#8a8a8a"/><rect x="36" y="524" width="1" height="37" fill="#eeeeee"/>
<!-- None Se button -->
<rect x="37" y="525" width="40" height="17" fill="#c6c6c6"/>
<rect x="37" y="525" width="40" height="1" fill="#a8a8a8"/><rect x="37" y="525" width="1" height="17" fill="#a8a8a8"/>
<rect x="37" y="541" width="40" height="1" fill="#e8e8e8"/><rect x="76" y="525" width="1" height="17" fill="#e8e8e8"/>
<text x="42.5" y="537.6" font-size="9.7" fill="#101010" stroke="#101010" stroke-width="0.12" textLength="33.5" lengthAdjust="spacingAndGlyphs">None Se</text>
<!-- lock -->
<g shape-rendering="geometricPrecision">
<path d="M85,532 v-2 a2.5,2.5 0 0 1 5,0 v2" fill="none" stroke="#989898" stroke-width="1.3"/>
<rect x="84" y="532" width="7" height="5.5" fill="#9a9a9a"/>
<rect x="85" y="533.5" width="5" height="1" fill="#b8b8b8"/>
</g>
<!-- abs/offset -->
<rect x="103.2" y="527.3" width="11.5" height="11" fill="#d0d0d0" stroke="#101010" stroke-width="1.4"/>
<circle cx="109" cy="532.8" r="1.4" fill="#101010" shape-rendering="geometricPrecision"/>
<!-- XYZ -->
<g font-size="10" fill="#202020">
<text x="120.5" y="537.5" textLength="8" lengthAdjust="spacingAndGlyphs">X:</text>
<text x="187" y="537.5" textLength="8" lengthAdjust="spacingAndGlyphs">Y:</text>
<text x="252" y="537.5" textLength="8" lengthAdjust="spacingAndGlyphs">Z:</text>
</g>
<g>
<rect x="129" y="526" width="48" height="15.5" fill="#f0f0f0"/>
<rect x="129" y="526" width="48" height="1.5" fill="#202020"/><rect x="129" y="526" width="1.5" height="15.5" fill="#202020"/>
<rect x="130.5" y="527.5" width="45.5" height="13" fill="#e2e2e2"/>
<rect x="194.5" y="526" width="46" height="15.5" fill="#f0f0f0"/>
<rect x="194.5" y="526" width="46" height="1.5" fill="#202020"/><rect x="194.5" y="526" width="1.5" height="15.5" fill="#202020"/>
<rect x="196" y="527.5" width="43.5" height="13" fill="#e2e2e2"/>
<rect x="260" y="526" width="27" height="15.5" fill="#f0f0f0"/>
<rect x="260" y="526" width="27" height="1.5" fill="#202020"/><rect x="260" y="526" width="1.5" height="15.5" fill="#202020"/>
<rect x="261.5" y="527.5" width="25" height="13" fill="#e2e2e2"/>
</g>
<g font-size="9.6" fill="#9a9a9a">
<text x="133" y="537.3" textLength="19" lengthAdjust="spacingAndGlyphs">0,0m</text>
<text x="198.5" y="537.3" textLength="19" lengthAdjust="spacingAndGlyphs">0,0m</text>
<text x="264" y="537.3" textLength="19" lengthAdjust="spacingAndGlyphs">0,0m</text>
</g>
<!-- status field -->
<rect x="37" y="544" width="251" height="17" fill="#c6c6c6"/>
<rect x="37" y="544" width="251" height="1" fill="#909090"/><rect x="37" y="544" width="1" height="17" fill="#909090"/>
<rect x="37" y="545" width="251" height="1" fill="#e4e4e4"/>
<text x="42.5" y="557" font-size="9.7" fill="#101010" stroke="#101010" stroke-width="0.12" textLength="158" lengthAdjust="spacingAndGlyphs">Click and drag to select and move objects</text>
<!-- key button -->
<rect x="287" y="524" width="35" height="36" fill="#c6c6c6"/>
<rect x="287" y="524" width="35" height="1" fill="#e8e8e8"/><rect x="287" y="524" width="1" height="36" fill="#e8e8e8"/>
<rect x="287" y="559" width="35" height="1" fill="#808080"/><rect x="321" y="524" width="1" height="36" fill="#808080"/>
<g shape-rendering="geometricPrecision">
<ellipse cx="297.3" cy="541.5" rx="3.1" ry="3.3" fill="none" stroke="#101010" stroke-width="1.8"/>
<rect x="300" y="540.6" width="13.3" height="2" fill="#101010"/>
<rect x="307.5" y="541" width="2" height="4.3" fill="#101010"/>
<rect x="311.3" y="541" width="2" height="3.5" fill="#101010"/>
</g>
<rect x="322" y="524" width="1" height="37" fill="#8a8a8a"/><rect x="323" y="524" width="1" height="37" fill="#eeeeee"/>
<!-- auto key / set key -->
<rect x="324.5" y="524.5" width="37.5" height="16.5" fill="#c6c6c6"/>
<rect x="324.5" y="524.5" width="37.5" height="1" fill="#e8e8e8"/><rect x="324.5" y="524.5" width="1" height="16.5" fill="#e8e8e8"/>
<rect x="324.5" y="540" width="37.5" height="1" fill="#808080"/><rect x="361" y="524.5" width="1" height="16.5" fill="#808080"/>
<text x="326.3" y="537" font-size="9.8" fill="#101010" stroke="#101010" stroke-width="0.15" textLength="35" lengthAdjust="spacingAndGlyphs">Auto Key</text>
<rect x="324.5" y="542" width="37.5" height="17" fill="#c6c6c6"/>
<rect x="324.5" y="542" width="37.5" height="1" fill="#e8e8e8"/><rect x="324.5" y="542" width="1" height="17" fill="#e8e8e8"/>
<rect x="324.5" y="558" width="37.5" height="1" fill="#808080"/><rect x="361" y="542" width="1" height="17" fill="#808080"/>
<text x="328.7" y="554.4" font-size="9.8" fill="#101010" stroke="#101010" stroke-width="0.15" textLength="30" lengthAdjust="spacingAndGlyphs">Set Key</text>
<!-- selected dropdown -->
<rect x="365" y="525.5" width="91" height="15" fill="#f2f2f2"/>
<rect x="365" y="525.5" width="91" height="1.5" fill="#303030"/><rect x="365" y="525.5" width="1.5" height="15" fill="#303030"/>
<rect x="366.5" y="527" width="88.5" height="12.5" fill="#e4e4e4"/>
<rect x="442" y="527.5" width="12" height="11.5" fill="#f4f4f4"/>
<rect x="442" y="538" width="12" height="1" fill="#808080"/><rect x="453" y="527.5" width="1" height="11.5" fill="#808080"/>
<polygon points="444.5,531.5 451.5,531.5 448,535.5" fill="#000" shape-rendering="geometricPrecision"/>
<text x="368" y="536.5" font-size="9.8" fill="#101010" stroke="#101010" stroke-width="0.15" textLength="34" lengthAdjust="spacingAndGlyphs">Selected</text>
<!-- curve icon -->
<g shape-rendering="geometricPrecision" fill="none">
<path d="M368,556 L372,556 M376,546 L380,546" stroke="#7070d0" stroke-width="1.2"/>
<path d="M368.5,548 L372,556 L376,546 L379,550" stroke="#e03040" stroke-width="1.5"/>
</g>
<rect x="380.5" y="558" width="1.5" height="1.5" fill="#101010"/>
<!-- key filters -->
<rect x="385.5" y="543" width="71" height="16" fill="#c6c6c6"/>
<rect x="385.5" y="543" width="71" height="1" fill="#e8e8e8"/><rect x="385.5" y="543" width="1" height="16" fill="#e8e8e8"/>
<rect x="385.5" y="558" width="71" height="1" fill="#808080"/><rect x="455.5" y="543" width="1" height="16" fill="#808080"/>
<text x="399.7" y="554.5" font-size="9.8" fill="#101010" stroke="#101010" stroke-width="0.15" textLength="44.5" lengthAdjust="spacingAndGlyphs">Key Filters...</text>
<!-- playback -->
<g fill="#101010" shape-rendering="geometricPrecision">
<rect x="463.6" y="529.5" width="2" height="7"/>
<path d="M466,533 L471,529.5 L471,536.5 Z M471,533 L476.5,529.5 L476.5,536.5 Z"/>
<path d="M486,533 L491,529.5 L491,536.5 Z"/><rect x="491.5" y="529.5" width="1.5" height="7"/><rect x="494.5" y="529.5" width="1.5" height="7"/>
<rect x="503.5" y="527.5" width="11.5" height="10.5" fill="none" stroke="#101010" stroke-width="2"/>
<path d="M507,530 L512.5,533 L507,536 Z"/>
<rect x="515.5" y="538.5" width="1.5" height="1.5"/>
<rect x="522" y="529.5" width="1.5" height="7"/><rect x="525" y="529.5" width="1.5" height="7"/><path d="M527,529.5 L532.3,533 L527,536.5 Z"/>
<path d="M541.6,529.5 L547,533 L541.6,536.5 Z M547,529.5 L552.5,533 L547,536.5 Z"/><rect x="553" y="529.5" width="2" height="7"/>
<rect x="465" y="548" width="1.5" height="6"/><path d="M467,551 L470.5,548 L470.5,554 Z M474.5,548 L471,551 L474.5,554 Z"/><rect x="475" y="548" width="1.5" height="6"/>
</g>
<rect x="480" y="526" width="1" height="13" fill="#8a8a8a"/><rect x="481" y="526" width="1" height="13" fill="#eeeeee"/>
<rect x="538" y="526" width="1" height="13" fill="#8a8a8a"/><rect x="539" y="526" width="1" height="13" fill="#eeeeee"/>
<rect x="561" y="524" width="1" height="37" fill="#8a8a8a"/><rect x="562" y="524" width="1" height="37" fill="#eeeeee"/>
<!-- frame field -->
<rect x="482" y="543" width="51" height="17" fill="#f2f2f2"/>
<rect x="482" y="543" width="51" height="1.5" fill="#303030"/><rect x="482" y="543" width="1.5" height="17" fill="#303030"/>
<rect x="483.5" y="544.5" width="48.5" height="14.5" fill="#e2e2e2"/>
<text x="486" y="555.5" font-size="10" fill="#101010">0</text>
<g shape-rendering="geometricPrecision" fill="#202020">
<path d="M535,550 L537.5,547 L540,550 Z M535,553 L537.5,556 L540,553 Z"/>
</g>
<rect x="534.5" y="551.3" width="6" height="0.8" fill="#909090"/>
<!-- time config -->
<g shape-rendering="geometricPrecision">
<rect x="546.5" y="546" width="9" height="11" fill="#e8e8e8" stroke="#303030" stroke-width="1.2"/>
<rect x="546.5" y="546" width="9" height="2.5" fill="#303030"/>
<circle cx="554" cy="554" r="3.2" fill="#f0f0f0" stroke="#c03030" stroke-width="1.2"/>
<path d="M554,552 v2 h1.5" stroke="#c03030" stroke-width="0.8" fill="none"/>
</g>
<!-- viewport nav -->
<g shape-rendering="geometricPrecision" fill="none">
<circle cx="569.5" cy="531" r="3.8" stroke="#1a2aa0" stroke-width="1.6" fill="#e8eef8"/>
<path d="M572.5,534 L577,538" stroke="#1a2aa0" stroke-width="2"/>
<!-- zoom all -->
<path d="M586,527 h10.5 v8.5 h-10.5 z M591.2,527 v8.5 M586,531.2 h10.5" stroke="#b02838" stroke-width="1.4"/>
<circle cx="586.5" cy="533.5" r="3.2" stroke="#1a2aa0" stroke-width="1.4" fill="#dde4f2"/>
<path d="M589,536 L591,538" stroke="#1a2aa0" stroke-width="1.6"/>
<!-- zoom extents -->
<path d="M603,528 L606,528 M603,528 V531 M615,528 L612,528 M615,528 V531 M603,538 H606 M603,538 V535 M615,538 H612 M615,538 V535" stroke="#101010" stroke-width="1.3"/>
<rect x="605" y="530.5" width="7" height="6.5" stroke="#2a2aa8" stroke-width="1.3" fill="#d8dcf0"/>
<path d="M605,530.5 l2,-2 h7 v6.5 l-2,2 M612,530.5 l2,-2" stroke="#2a2aa8" stroke-width="1.1"/>
<rect x="616" y="538" width="1.5" height="1.5" fill="#101010"/>
<!-- zoom extents all -->
<path d="M622,527 h11 v8.5 h-11 z M627.5,527 v8.5 M622,531.2 h11" stroke="#b02838" stroke-width="1.4"/>
<rect x="620.5" y="532" width="7" height="6.5" stroke="#2a2aa8" stroke-width="1.3" fill="#d8dcf0"/>
<path d="M620.5,532 l2,-2 h7 v6.5 l-2,2" stroke="#2a2aa8" stroke-width="1.1"/>
<rect x="634" y="538" width="1.5" height="1.5" fill="#101010"/>
<!-- FOV -->
<path d="M565,545 L577.2,550.4 L565,556 M569.5,547.8 Q567,550.6 569.5,553.3" stroke="#101010" stroke-width="1.4"/>
<rect x="578" y="557" width="1.5" height="1.5" fill="#101010"/>
<!-- pan hand -->
<path d="M587,556 C585,553 584,550 585.5,549 C586.5,548.5 587,550 587.5,551 L587.5,546 C587.5,544.8 589.3,544.8 589.3,546 L589.5,545 C589.5,543.8 591.3,543.8 591.3,545 L591.5,545.5 C591.5,544.3 593.3,544.3 593.3,545.5 L593.5,547 C593.5,546 595.3,546 595.3,547 L595.3,552 C595.3,555 594,557 592,557.5 L588.5,557.5 Z" stroke="#202020" stroke-width="1" fill="#f0f0f0"/>
<rect x="596" y="557" width="1.5" height="1.5" fill="#101010"/>
<!-- orbit -->
<circle cx="607" cy="551" r="3.9" stroke="#202020" stroke-width="1.2"/>
<path d="M607,551 V544.5 M607,551 H614 M607,551 L602.3,554.8" stroke="#2a2aa8" stroke-width="1.3"/>
<path d="M614.8,551 L612.5,549.3 L612.5,552.7 Z" fill="#101010"/>
<rect x="606" y="543.5" width="2" height="2" fill="#303030"/><rect x="601.5" y="554" width="2" height="2" fill="#303030"/>
<rect x="615" y="557" width="1.5" height="1.5" fill="#101010"/>
<!-- max toggle -->
<rect x="620.5" y="544.5" width="9.5" height="9.5" stroke="#2a2aa8" stroke-width="1.5" fill="#e8e8f0"/>
<rect x="625" y="549" width="8" height="8" stroke="#303030" stroke-width="1.5" fill="none"/>
<path d="M622.5,546.5 L627,551 M622.5,546.5 h2.5 M622.5,546.5 v2.5" stroke="#101010" stroke-width="1"/>
</g>
</g>

<!-- window border -->
<rect x="0" y="0" width="640" height="1" fill="#2f5a5a"/>
<rect x="0" y="0" width="1" height="563" fill="#2f5a5a"/>
<rect x="639" y="0" width="1" height="563" fill="#2f5a5a"/>
<rect x="0" y="561" width="640" height="2" fill="#2f5a5a"/>
</svg>
</body></html>
